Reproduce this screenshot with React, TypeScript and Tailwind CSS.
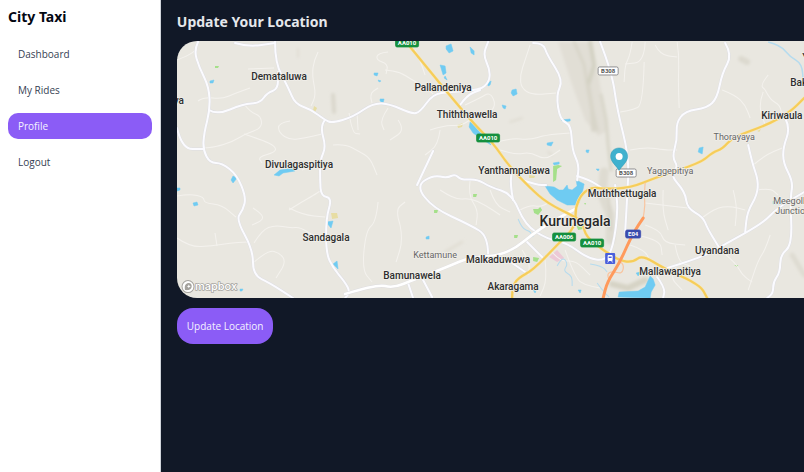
import React from "react";

type Point = [number, number];

/** Turns "x,y x,y ..." into a path whose corners are rounded through the segment midpoints. */
function smooth(points: string): string {
  const p = points.split(" ").map((s) => s.split(",").map(Number) as Point);
  let d = `M${p[0][0]} ${p[0][1]}`;
  for (let i = 1; i < p.length - 1; i++) {
    const mx = (p[i][0] + p[i + 1][0]) / 2;
    const my = (p[i][1] + p[i + 1][1]) / 2;
    d += ` Q${p[i][0]} ${p[i][1]} ${mx} ${my}`;
  }
  const last = p[p.length - 1];
  return `${d} L${last[0]} ${last[1]}`;
}

const lanes = [
  "177,60 188,56 196,50",
  "198,101 204,97 222,99 236,93 250,88",
  "248,69 274,68",
  "244,104 250,112 261,116 262,128 245,134 232,142 215,147 204,148",
  "244,134 262,140 275,146 276,152 258,157 262,163",
  "290,121 278,123 279,133 290,140 305,138 322,134",
  "318,52 314,60 312,75 316,95 311,106",
  "177,196 190,194 204,197 204,203 222,205 236,217",
  "177,238 190,247 212,246 230,243 247,242",
  "215,233 217,246",
  "253,208 262,214 263,220 252,225",
  "254,243 262,230 275,225 290,228 300,227 312,235 325,240",
  "254,262 268,250 280,253 286,262 276,278",
  "289,210 300,203 314,195 320,191",
  "289,208 303,215 325,217",
  "302,170 314,165 320,165",
  "378,202 376,222 366,230 362,270 372,282",
  "333,145 345,144 360,152 370,158 377,175",
  "349,113 352,133 360,134",
  "357,113 358,130",
  "388,52 378,53 376,60 388,64 386,74",
  "372,103 369,94 378,88",
  "388,108 380,120 384,130",
  "415,50 420,60 425,75",
  "433,94 424,86 412,80 400,72 385,70",
  "465,105 480,98 490,92 496,105 488,115",
  "430,130 445,125 460,126 470,120",
  "398,120 405,130 390,140",
  "530,45 525,60 520,75 521,88 532,95 556,93",
  "493,143 510,138 530,140 545,135 570,133",
  "500,150 515,155 530,152 545,160 560,150",
  "440,130 438,145 425,155",
  "400,225 395,210 405,202",
  "400,225 403,240 396,262",
  "440,190 455,200 470,198 485,205 500,215",
  "470,180 468,195 478,210 476,225",
  "490,190 495,205 510,212",
  "520,210 530,205 540,207 548,203",
  "522,250 530,262 528,275",
  "550,250 560,262 575,260 590,275",
  "545,260 547,280 540,296",
  "565,250 575,278 585,285 600,288",
  "632,42 630,55 625,65 624,82",
  "645,42 644,62 625,64",
  "644,62 643,105 632,110 620,112",
  "677,42 679,55 678,80 679,108",
  "655,45 660,55 677,57",
  "722,90 735,95 745,105 750,118",
  "765,90 770,100 780,105 782,118",
  "768,75 760,85 765,90",
  "763,92 758,105 765,125",
  "630,150 645,147 665,150 677,150",
  "645,203 670,206 688,208",
  "645,225 660,230 664,243 685,245",
  "663,190 662,210 668,230",
  "703,217 715,208 730,206 745,210",
  "733,190 737,205 735,226",
  "757,190 770,188 778,195",
  "770,235 765,250 758,260 748,290",
  "720,250 735,262 742,275 752,282",
  "630,245 645,250 650,262",
  "640,236 660,240 662,255",
  "675,245 678,262 690,266",
  "680,262 668,275 682,290",
  "753,165 765,155 782,148",
];

const roads = [
  "198,42 194,50 199,67 209,87 210,110 204,133 203,150 210,163 222,163 237,175 246,197 243,210 236,219 253,250 253,275 270,283 293,298",
  "235,43 248,47 275,43",
  "275,42 275,63 288,87 295,104 310,109 325,120 332,123 353,117 373,103 390,104 412,114 420,112 433,94 450,92 480,90 489,82 490,70 483,55 488,42",
  "209,110 217,115 243,104 260,103 267,93 278,89 278,72",
  "177,128 182,149 203,149",
  "325,120 320,126 326,147 320,160 320,180 321,196 332,198 326,218 326,253 333,268 345,282 350,292 345,298",
  "460,105 467,95 480,90",
  "533,43 543,43 547,55 563,80 556,95 560,120 571,125 572,150 579,165 577,180",
  "513,200 510,185 512,168",
  "433,151 417,185",
  "488,255 488,236 470,225 433,208 416,186 433,175 447,178 455,174 461,180 477,179 490,187 512,194 525,225 547,239 567,243 587,258 605,261 613,247 618,210 615,185",
  "522,180 537,185 546,185",
  "600,42 612,73 617,110 629,157 627,198 625,232",
  "725,43 732,55 722,73 717,98 707,108 685,111 676,123 677,140 672,157 678,167 670,175 685,192 687,208 703,217 707,228 718,246",
  "667,268 703,257 723,245 763,223 777,208 804,192",
  "748,145 752,163 758,180 757,195 747,212 745,232",
  "785,118 790,128 783,147 783,163 793,182 790,198 792,245 780,255 780,272 773,282 773,293 767,298",
  "657,277 665,288 663,298",
  "408,283 413,298",
  "423,280 432,297",
  "512,263 525,272",
  "527,242 542,257",
  "577,176 590,180 603,189",
];

const majorRoads = [
  "345,294 377,284 393,288 413,280 447,267 470,257 507,255 540,228 575,209",
];

const yellowRoads = [
  "406,42 410,47 470,120 493,143 508,165 530,188 547,203 575,217 582,222 586,237 603,250 620,261 633,262 642,255 663,268 700,285 707,298",
  "512,298 512,287 518,278 533,270 557,245 576,226 575,208 582,193 593,187 603,189 630,188 657,177 700,163 713,152 722,149 733,137 767,125 790,112 804,98",
];

const water = [
  "545,186 554,187 559,190 563,190 567,185 568,189 572,190 577,186 576,180 584,184 583,189 579,203 576,205 567,205 557,200 550,194",
  "274,175 280,170 294,168 295,171 283,173 279,176",
  "470,122 475,125 481,133 489,141 491,145 480,138 473,133 469,127",
  "446,46 451,44 453,51 449,53 446,49",
  "470,47 474,51 474,55 471,53",
  "440,65 445,66 446,73 443,75",
  "512,90 516,89 517,94 513,96 511,93",
  "502,105 506,106 505,109 503,108",
  "561,120 570,119 570,121 563,122",
  "547,143 553,142 551,146 547,145",
  "487,83 491,81 490,85 488,86",
  "699,148 703,147 702,154 698,152",
  "326,222 333,221 331,228",
  "333,264 337,261 338,269",
  "233,176 237,178 233,183 231,180",
  "193,203 197,202 198,205 194,206",
  "210,81 214,80 213,83 210,83",
  "374,73 378,73 377,76 374,75",
  "378,80 381,81 379,82",
  "380,99 384,99 383,103 380,101",
  "618,297 619,292 638,291 645,287 650,276 653,279 655,285 651,292 650,298",
  "773,201 784,200 784,204 773,204",
  "586,150 589,150 588,153 586,152",
  "596,169 599,169 598,171",
  "426,237 429,236 429,239 426,239",
  "177,188 180,188 180,190 177,191",
  "240,289 243,289 242,291 240,291",
  "445,76 447,80 444,78",
  "553,163 559,162 559,164 554,165",
  "636,273 640,272 638,276",
  "578,290 581,290 580,293",
  "533,290 536,290 535,293",
];

const greens = [
  "215,66 219,66 218,68 215,68",
  "553,166 558,165 562,166 557,169 556,180 553,182",
  "533,209 538,209 540,207 542,210 538,215 534,213",
  "473,194 477,194 476,197 473,197",
  "434,210 438,210 437,213 434,213",
  "514,235 518,235 517,238 514,238",
  "533,257 539,258 537,262 533,261",
  "576,225 581,225 583,229 578,230",
  "584,203 586,203 585,205",
  "734,265 738,265 737,267",
];

const ochres = [
  "314,106 317,108 315,112 313,110",
  "331,213 337,213 338,218 332,219",
  "457,125 463,123 462,127 458,128",
  "757,131 761,129 759,132",
  "529,175 535,176 534,178 529,178",
];

type Label = { text: string; x: number; y: number; kind?: "minor" | "city"; anchor?: "start" | "end" };

const labels: Label[] = [
  { text: "Demataluwa", x: 279, y: 80 },
  { text: "Pallandeniya", x: 443, y: 91 },
  { text: "Thiththawella", x: 467, y: 118 },
  { text: "Divulagaspitiya", x: 299, y: 168 },
  { text: "Yanthampalawa", x: 514, y: 174 },
  { text: "Sandagala", x: 326, y: 241 },
  { text: "Malkaduwawa", x: 498, y: 263 },
  { text: "Bamunawela", x: 412, y: 279 },
  { text: "Akaragama", x: 513, y: 290 },
  { text: "Muththettugala", x: 622, y: 197 },
  { text: "Uyandana", x: 717, y: 254 },
  { text: "Mallawapitiya", x: 670, y: 275 },
  { text: "Kiriwaula", x: 761, y: 119, anchor: "start" },
  { text: "Bak", x: 790, y: 86, anchor: "start" },
  { text: "Y", x: 802, y: 61, anchor: "start" },
  { text: "ya", x: 184, y: 104, anchor: "end" },
  { text: "Kurunegala", x: 575, y: 226, kind: "city" },
  { text: "Kettamune", x: 435, y: 258, kind: "minor" },
  { text: "Thorayaya", x: 734, y: 140, kind: "minor" },
  { text: "Yaggepitiya", x: 670, y: 174, kind: "minor" },
  { text: "Meegolla", x: 773, y: 204, kind: "minor", anchor: "start" },
  { text: "Junction", x: 775, y: 214, kind: "minor", anchor: "start" },
];

const labelClass = {
  town: "fill-[#2e2e2e] font-medium text-[10px]",
  minor: "fill-[#666666] text-[9px]",
  city: "fill-[#262626] font-medium text-[14px]",
};

const shields = [
  { text: "AA010", x: 407, y: 43, w: 23, fill: "#15903f" },
  { text: "AA010", x: 488, y: 138, w: 23, fill: "#15903f" },
  { text: "AA006", x: 564, y: 237, w: 23, fill: "#15903f" },
  { text: "AA010", x: 592, y: 243, w: 23, fill: "#15903f" },
  { text: "E04", x: 633, y: 234, w: 15, fill: "#3b4cae" },
  { text: "B308", x: 608, y: 71, w: 20, fill: "#ffffff" },
  { text: "B308", x: 626, y: 173, w: 20, fill: "#ffffff" },
];

function MapView() {
  return (
    <svg
      role="img"
      aria-label="Map of Kurunegala"
      viewBox="177 41 627 257"
      preserveAspectRatio="xMinYMid slice"
      className="block h-[257px] w-full font-[Roboto,sans-serif]"
    >
      <defs>
        <filter id="relief" x="-30%" y="-30%" width="160%" height="160%">
          <feGaussianBlur stdDeviation="1.5" />
        </filter>
      </defs>
      <rect x="177" y="41" width="627" height="257" fill="#e9e7e0" />

      <g filter="url(#relief)" fill="none" strokeLinecap="round">
        <path d="M558 42 L592 42 L600 85 L608 130 L598 136 L585 120 L572 85 Z" fill="#e1ded5" />
        <path d="M574 42 L584 65 L588 90 L597 130" stroke="#d8d5c9" strokeWidth="3" />
        <path d="M590 42 L594 65 L588 85" stroke="#d3d1c3" strokeWidth="4" />
        <path d="M588 85 L592 110 L593 130" stroke="#d8d5c9" strokeWidth="4" />
        <path d="M601 95 L606 120 L608 145 L611 170" stroke="#d8d6c9" strokeWidth="3" />
        <path d="M604 172 L602 195 L610 215 L610 240" stroke="#dedbd1" strokeWidth="9" />
        <path d="M608 190 L611 230" stroke="#d5d2c6" strokeWidth="2" />
        <path d="M333 95 L334 112" stroke="#dad7cc" strokeWidth="4" />
        <path d="M298 49 L298 57" stroke="#e0ddd3" strokeWidth="2" />
        <path d="M741 59 L747 62" stroke="#dcd9cf" strokeWidth="6" />
        <path d="M612 284 L628 288 L645 280" stroke="#d6d3c5" strokeWidth="6" />
        <path d="M792 255 L804 275" stroke="#dedbd1" strokeWidth="5" />
        <path d="M510 122 L522 118 M548 152 L552 155" stroke="#dfdcd2" strokeWidth="2" />
        <path d="M445 252 L462 242" stroke="#e1ded4" strokeWidth="3" />
      </g>

      <path d="M549 257 l8 -7 l7 8 l-7 4 z" fill="#ecc9d6" />
      <g fill="#e7dda3">{ochres.map((p) => <polygon key={p} points={p} />)}</g>
      <g fill="#a5e08a">{greens.map((p) => <polygon key={p} points={p} />)}</g>

      <g fill="none" stroke="#f4f2ee" strokeWidth="1" strokeLinejoin="round">
        {lanes.map((p) => <path key={p} d={smooth(p)} />)}
      </g>
      <g fill="none" stroke="#b5dbee" strokeWidth="1">
        <path d={smooth("768,42 780,45 790,57 802,64 803,84")} strokeWidth="1.5" />
        <path d={smooth("518,219 522,229 530,231 533,237")} />
        <path d={smooth("590,264 602,266 607,272")} />
        <path d={smooth("557,266 562,256 568,264 563,271 572,276 572,286")} />
        <path d={smooth("597,283 602,290 609,297")} />
      </g>
      <g fill="#6fcbf2" stroke="#6fcbf2" strokeWidth="0.5" strokeLinejoin="round">
        {water.map((p) => <polygon key={p} points={p} />)}
      </g>

      <g fill="none" strokeLinejoin="round" strokeLinecap="round">
        <g stroke="#dedee2" strokeWidth="2.8">{roads.map((p) => <path key={p} d={smooth(p)} />)}</g>
        <g stroke="#fbfbff" strokeWidth="2">{roads.map((p) => <path key={p} d={smooth(p)} />)}</g>
        {majorRoads.map((p) => (
          <g key={p}>
            <path d={smooth(p)} stroke="#dedde0" strokeWidth="3.4" />
            <path d={smooth(p)} stroke="#ffffff" strokeWidth="2.6" />
          </g>
        ))}
        <g stroke="#f5e7bb" strokeWidth="3.2">{yellowRoads.map((p) => <path key={p} d={smooth(p)} />)}</g>
        <g stroke="#f6cd5a" strokeWidth="2.2">{yellowRoads.map((p) => <path key={p} d={smooth(p)} />)}</g>
        <path d={smooth("645,183 644,195 645,205 643,218")} stroke="#f8c5a0" strokeWidth="1.2" />
        <path d={smooth("620,262 624,264 622,274 612,271 607,274 609,280")} stroke="#f8c5a0" strokeWidth="1.2" />
        <path d={smooth("643,218 633,232 620,262 607,282 603,298")} stroke="#ff9a5c" strokeWidth="3" />
      </g>

      {labels.map((l) => (
        <text
          key={l.text}
          x={l.x}
          y={l.y}
          textAnchor={l.anchor ?? "middle"}
          stroke="#f1efea"
          strokeWidth="1.5"
          strokeLinejoin="round"
          paintOrder="stroke"
          className={labelClass[l.kind ?? "town"]}
        >
          {l.text}
        </text>
      ))}

      <g transform="translate(605 253)">
        <rect width="10" height="11" rx="1" fill="#4a5fdc" />
        <rect x="2.5" y="2" width="5" height="6" rx="1" fill="#ffffff" />
        <path d="M3.5 3.5 h3 v1.5 h-3 z" fill="#4a5fdc" />
        <path d="M3.5 8 L2.5 9.5 M6.5 8 L7.5 9.5" stroke="#ffffff" strokeWidth="0.8" />
      </g>

      {shields.map((s) => {
        const plain = s.fill === "#ffffff";
        return (
          <g key={`${s.x}-${s.y}`}>
            <rect
              x={s.x - s.w / 2}
              y={s.y - 4}
              width={s.w}
              height="8"
              rx="1.5"
              fill={s.fill}
              stroke={plain ? "#77777b" : s.fill}
              strokeWidth="0.8"
            />
            <text
              x={s.x}
              y={s.y + 2}
              textAnchor="middle"
              className={plain ? "fill-[#555555] text-[6px] font-bold" : "fill-white text-[6px] font-bold"}
            >
              {s.text}
            </text>
          </g>
        );
      })}

      <path
        d="M619 148 C613.800 148 610.500 151.600 610.500 156.400 C610.500 162 616.500 166 619 170.500 C621.500 166 627.500 162 627.500 156.400 C627.500 151.600 624.200 148 619 148 Z"
        fill="#3fb1ce"
        stroke="#3599b3"
        strokeWidth="0.5"
      />
      <circle cx="619" cy="156.500" r="3.500" fill="#ffffff" />

      <g>
        <circle cx="188" cy="286.500" r="6" fill="#ffffff" stroke="#a5a39e" strokeWidth="1" />
        <path d="M185 290 C184 285 186 283 189 283 C192 283.500 192.500 287 190.500 289 C189 290.300 187 290.300 185 290 Z" fill="#a5a39e" />
        <path d="M188.800 284.500 l0.600 1.300 1.300 0.600 -1.300 0.600 -0.600 1.300 -0.600 -1.300 -1.300 -0.600 1.300 -0.600 z" fill="#ffffff" />
        <text
          x="195"
          y="290"
          stroke="#a5a39e"
          strokeWidth="1.5"
          strokeLinejoin="round"
          paintOrder="stroke"
          className="fill-white font-[Inter,sans-serif] text-[11px] font-medium"
        >
          mapbox
        </text>
      </g>
    </svg>
  );
}

const navItems = ["Dashboard", "My Rides", "Profile", "Logout"];

export default function App() {
  return (
    <div className="flex min-h-screen bg-[#111827] font-['Noto_Sans','Open_Sans',sans-serif]">
      <aside className="w-1/5 shrink-0 border-r border-gray-300 bg-white px-2 pt-1.5">
        <h2 className="text-[14px] leading-[22px] font-bold text-gray-950">City Taxi</h2>
        <nav className="mt-[13px] flex flex-col gap-2.5">
          {navItems.map((item) => (
            <a
              key={item}
              href={`#${item.toLowerCase().replace(" ", "-")}`}
              aria-current={item === "Profile" ? "page" : undefined}
              className={
                item === "Profile"
                  ? "rounded-[10px] bg-[#8b5cf6] px-2.5 font-['Open_Sans',sans-serif] text-[10px] leading-[26px] text-violet-50"
                  : "rounded-[10px] px-2.5 font-['Open_Sans',sans-serif] text-[10px] leading-[26px] text-gray-700"
              }
            >
              {item}
            </a>
          ))}
        </nav>
      </aside>
      <main className="min-w-0 flex-1 pt-2.5 pl-4">
        <h1 className="text-[14px] leading-6 font-bold text-gray-200">Update Your Location</h1>
        <div className="mt-[7px] overflow-hidden rounded-l-[20px]">
          <MapView />
        </div>
        <button
          type="button"
          className="mt-2.5 h-9 rounded-2xl bg-[#8b5cf6] px-2.5 font-['Open_Sans',sans-serif] text-[10px] text-violet-50"
        >
          Update Location
        </button>
      </main>
    </div>
  );
}
